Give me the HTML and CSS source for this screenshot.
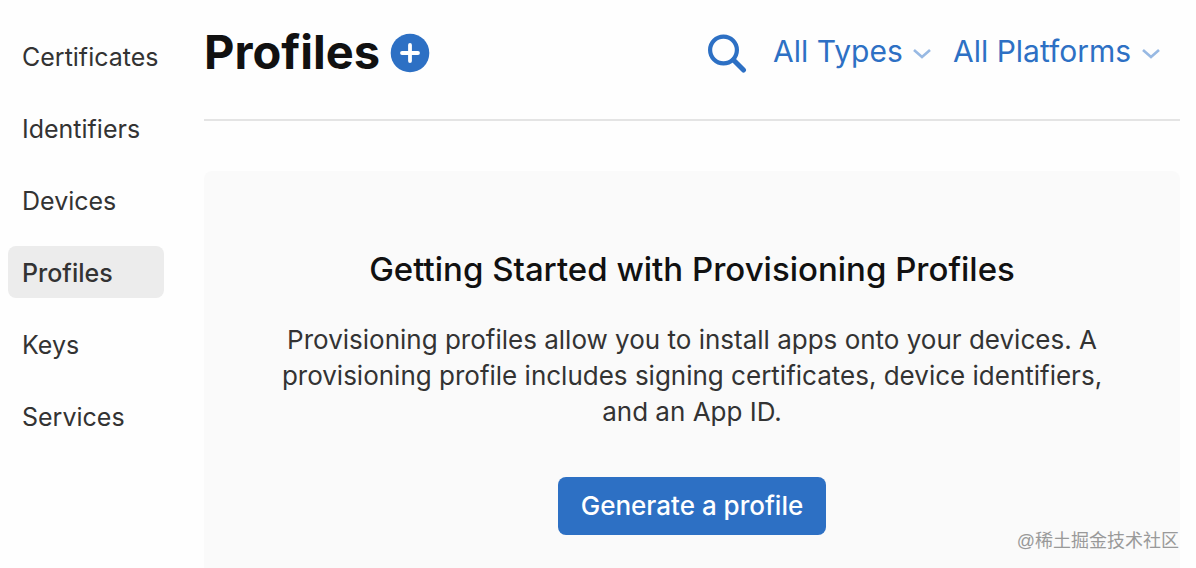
FILE: index.html
```
<!DOCTYPE html>
<html lang="en">
<head>
    <meta charset="UTF-8">
    <meta name="viewport" content="width=device-width, initial-scale=1.0">
    <title>Profiles</title>
    <link rel="stylesheet" href="styles.css">
</head>
<body>
    <nav class="sidebar">
        <a href="#">Certificates</a>
        <a href="#">Identifiers</a>
        <a href="#">Devices</a>
        <a href="#" class="active" aria-current="page">Profiles</a>
        <a href="#">Keys</a>
        <a href="#">Services</a>
    </nav>
    <main class="content">
        <header class="header">
            <h1>Profiles</h1>
            <button class="icon-btn" type="button" aria-label="Add profile">
                <svg width="40" height="40" viewBox="0 0 40 40">
                    <circle cx="20" cy="20" r="19.3" fill="#2d70c4"/>
                    <path d="M20 12v16M12 20h16" stroke="#fff" stroke-width="3.8" stroke-linecap="round"/>
                </svg>
            </button>
            <div class="filters">
                <button class="icon-btn search" type="button" aria-label="Search">
                    <svg width="40" height="40" viewBox="0 0 40 40" fill="none" stroke="#2d70c4">
                        <circle cx="16.5" cy="17" r="13.4" stroke-width="4.2"/>
                        <path d="M26.5 27l10 10" stroke-width="5" stroke-linecap="round"/>
                    </svg>
                </button>
                <div class="filter">
                    <select aria-label="Type">
                        <option>All Types</option>
                    </select>
                    <svg width="18" height="12" viewBox="0 0 18 12" fill="none" stroke="#98b9e3" stroke-width="2.6">
                        <path d="M1 3l8 7 8-7"/>
                    </svg>
                </div>
                <div class="filter">
                    <select aria-label="Platform">
                        <option>All Platforms</option>
                    </select>
                    <svg width="18" height="12" viewBox="0 0 18 12" fill="none" stroke="#98b9e3" stroke-width="2.6">
                        <path d="M1 3l8 7 8-7"/>
                    </svg>
                </div>
            </div>
        </header>
        <section class="panel">
            <h2>Getting Started with Provisioning Profiles</h2>
            <p>Provisioning profiles allow you to install apps onto your devices. A provisioning profile includes signing certificates, device identifiers, and an App ID.</p>
            <button class="generate" type="button">Generate a profile</button>
        </section>
    </main>
    <div class="watermark">@稀土掘金技术社区</div>
</body>
</html>
```

FILE: styles.css
```
* {
    box-sizing: border-box;
}
body {
    margin: 0;
    display: flex;
    min-height: 100vh;
    background-color: #fefefe;
    color: #333;
    font-family: Inter, "Liberation Sans", sans-serif;
    font-size: 26px;
}
.sidebar {
    display: flex;
    flex-direction: column;
    gap: 20px;
    flex: 0 0 164px;
    padding: 30px 0 0 8px;
}
.sidebar a {
    padding: 9px 4px 7px 14px;
    line-height: 36px;
    font-size: 25px;
    border-radius: 8px;
    color: #333;
    text-decoration: none;
}
.sidebar .active {
    background-color: #ececec;
    font-weight: 500;
}
.content {
    flex: 1;
    display: flex;
    flex-direction: column;
    gap: 50px;
    padding: 0 16px 0 40px;
}
.header {
    display: flex;
    align-items: center;
    gap: 10px;
    padding: 24px 20px 37px 0;
    border-bottom: 2px solid #e4e4e4;
}
h1, h2 {
    margin: 0;
    color: #111;
}
h1 {
    padding-bottom: 2px;
    font-size: 47px;
    line-height: 56px;
    font-weight: 700;
}
.icon-btn {
    display: flex;
    padding: 0;
    border: 0;
    background: none;
}
.filters {
    display: flex;
    align-items: center;
    gap: 22px;
    margin-left: auto;
}
.search {
    padding-right: 4px;
}
.filter {
    display: flex;
    align-items: center;
    gap: 10px;
}
.filter select {
    appearance: none;
    padding: 0 0 4px;
    border: 0;
    background: none;
    color: #2d70c4;
    font: inherit;
    font-size: 30px;
}
.panel {
    flex: 1;
    display: flex;
    flex-direction: column;
    align-items: center;
    padding: 75px 72px 33px;
    border-radius: 8px 8px 0 0;
    background-color: #fafafa;
    text-align: center;
}
h2 {
    font-size: 33px;
    line-height: 46px;
    font-weight: 500;
}
.panel p {
    margin: 30px 0 47px;
    line-height: 36px;
}
.generate {
    padding: 10px 23px;
    border: 0;
    border-radius: 8px;
    background-color: #2d70c4;
    color: #fff;
    font: inherit;
    font-weight: 500;
    line-height: 38px;
}
.watermark {
    position: absolute;
    right: 17px;
    bottom: 14px;
    color: #999;
    font-family: "Liberation Sans", "Noto Sans CJK SC", sans-serif;
    font-size: 18px;
    line-height: 26px;
}
```
